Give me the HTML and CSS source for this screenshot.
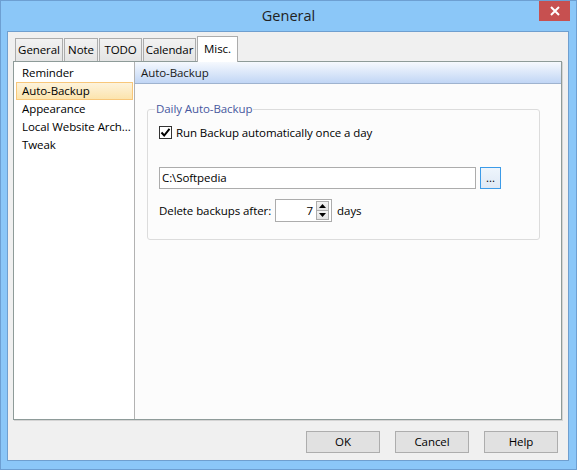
FILE: index.html
```html
<!DOCTYPE html>
<html>
<head>
<meta charset="utf-8">
<link rel="stylesheet" href="styles.css">
</head>
<body>
<div class="window">
  <div class="titlebar">
    <div></div>
    <div class="title">General</div>
    <div class="close"><svg width="10" height="10" viewBox="0 0 10 10"><path d="M1 1 L9 9 M9 1 L1 9" stroke="#fff" stroke-width="2"/></svg></div>
  </div>
  <div class="client">
    <div class="tabs">
      <div class="tab t-general">General</div>
      <div class="tab t-note">Note</div>
      <div class="tab t-todo">TODO</div>
      <div class="tab t-cal">Calendar</div>
      <div class="tab tab-sel t-misc">Misc.</div>
    </div>
    <div class="panel">
      <div class="list">
        <div class="item">Reminder</div>
        <div class="item item-sel">Auto-Backup</div>
        <div class="item">Appearance</div>
        <div class="item">Local Website Arch...</div>
        <div class="item">Tweak</div>
      </div>
      <div class="pane">
        <div class="pane-head">Auto-Backup</div>
        <fieldset class="group">
          <legend>Daily Auto-Backup</legend>
          <div class="check-row">
            <span class="checkbox"><svg width="11" height="11" viewBox="0 0 11 11"><path d="M1.5 5.5 L4.2 8.5 L9.5 1.8" fill="none" stroke="#000" stroke-width="2"/></svg></span>
            <span>Run Backup automatically once a day</span>
          </div>
          <div class="path-row">
            <div class="field">C:\Softpedia</div>
            <div class="browse">...</div>
          </div>
          <div class="spin-row">
            <span>Delete backups after:</span>
            <div class="spin">
              <div class="spin-val">7</div>
              <div class="spin-btns">
                <div class="spin-btn"><svg width="7" height="4" viewBox="0 0 7 4"><path d="M0 4 L3.5 0 L7 4 Z" fill="#000"/></svg></div>
                <div class="spin-btn"><svg width="7" height="4" viewBox="0 0 7 4"><path d="M0 0 L3.5 4 L7 0 Z" fill="#000"/></svg></div>
              </div>
            </div>
            <span class="days">days</span>
          </div>
        </fieldset>
      </div>
    </div>
    <div class="buttons">
      <div class="btn">OK</div>
      <div class="btn">Cancel</div>
      <div class="btn">Help</div>
    </div>
  </div>
</div>
</body>
</html>
```
FILE: styles.css
```css
html, body {
  margin: 0;
  padding: 0;
}
body {
  width: 577px;
  height: 470px;
  overflow: hidden;
  font-family: "Open Sans", "Noto Sans", sans-serif;
  font-size: 11.5px;
  letter-spacing: -0.08px;
  color: #000;
}
.window {
  box-sizing: border-box;
  width: 577px;
  height: 470px;
  background: #8bc7f8;
  border: 1px solid #6d9fd2;
  display: flex;
  flex-direction: column;
}
.titlebar {
  height: 30px;
  display: grid;
  grid-template-columns: 1fr auto 1fr;
  align-items: start;
}
.title {
  font-size: 14.5px;
  letter-spacing: 0;
  color: #222;
  line-height: 29px;
}
.close {
  justify-self: end;
  margin-right: 6px;
  width: 31px;
  height: 20px;
  background: #c75050;
  display: flex;
  align-items: center;
  justify-content: center;
}
.client {
  flex: 1;
  margin: 0 7px 8px 6px;
  border: 1px solid #6f9fcf;
  background: #f0f0f0;
  display: flex;
  flex-direction: column;
  padding-top: 4px;
}
.tabs {
  height: 25px;
  display: flex;
  align-items: flex-end;
  padding-left: 7px;
  position: relative;
  z-index: 2;
}
.tab {
  box-sizing: border-box;
  height: 23px;
  border: 1px solid #acacac;
  border-bottom: none;
  background: linear-gradient(#f2f2f2, #e4e4e4);
  text-align: center;
  line-height: 22px;
  margin-right: 1px;
}
.t-general { width: 48px; }
.t-note { width: 34px; }
.t-todo { width: 43px; }
.t-cal { width: 53px; }
.tab-sel {
  height: 26px;
  width: 41px;
  background: #fff;
  margin-bottom: -1px;
  line-height: 24px;
  margin-right: 0;
}
.panel {
  box-sizing: border-box;
  height: 359px;
  margin: 0 6px 0 5px;
  border: 1px solid #8e9b99;
  box-shadow: 1px 1px 0 #d4d4d4;
  background: #fff;
  display: flex;
}
.list {
  box-sizing: border-box;
  width: 121px;
  border-right: 1px solid #b2b2b2;
  background: #fff;
  padding: 2px 1px 0 2px;
}
.item {
  box-sizing: border-box;
  height: 18px;
  line-height: 18px;
  padding-left: 6px;
  white-space: nowrap;
  overflow: hidden;
}
.item-sel {
  border: 1px solid #f8c77a;
  background: linear-gradient(#fdf3dc, #fce4ad);
  padding-left: 5px;
  line-height: 16px;
}
.pane {
  flex: 1;
  background: #fcfcfc;
}
.pane-head {
  box-sizing: border-box;
  height: 22px;
  line-height: 21px;
  padding-left: 6px;
  border-bottom: 1px solid #9fb3cf;
  background: linear-gradient(#f6f9fe, #c1d6f5);
  color: #1a1a1a;
}
.group {
  margin: 17px 21px 0 12px;
  border: 1px solid #dcdcdc;
  border-radius: 3px;
  padding: 7px 11px 17px 11px;
  min-width: 0;
}
.group legend {
  color: #47589e;
  padding: 0 1px;
  margin-left: -4px;
  line-height: 16px;
}
.check-row {
  display: flex;
  align-items: center;
  height: 16px;
}
.checkbox {
  box-sizing: border-box;
  width: 13px;
  height: 13px;
  border: 1px solid #333;
  background: #fff;
  display: flex;
  align-items: center;
  justify-content: center;
  margin-right: 4px;
}
.path-row {
  display: flex;
  margin-top: 27px;
  gap: 4px;
}
.field {
  box-sizing: border-box;
  width: 317px;
  height: 22px;
  border: 1px solid #acacac;
  background: #fff;
  line-height: 20px;
  padding-left: 2px;
}
.browse {
  box-sizing: border-box;
  width: 21px;
  height: 22px;
  border: 1px solid #3c9be8;
  background: linear-gradient(#eef5fc, #dfe9f5);
  text-align: center;
  line-height: 20px;
}
.spin-row {
  display: flex;
  align-items: center;
  margin-top: 10px;
  gap: 4px;
}
.spin {
  box-sizing: border-box;
  width: 57px;
  height: 23px;
  border: 1px solid #acacac;
  background: #fff;
  display: flex;
  align-items: center;
  padding: 1px 2px 1px 0;
}
.spin-val {
  flex: 1;
  text-align: right;
  padding-right: 3px;
}
.spin-btns {
  display: flex;
  flex-direction: column;
  width: 13px;
  height: 19px;
}
.spin-btn {
  box-sizing: border-box;
  flex: 1;
  border: 1px solid #acacac;
  background: linear-gradient(#f3f3f3, #e3e3e3);
  display: flex;
  align-items: center;
  justify-content: center;
}
.spin-btn + .spin-btn {
  border-top: none;
}
.days {
  margin-left: 1px;
}
.buttons {
  display: flex;
  justify-content: flex-end;
  gap: 15px;
  margin-top: 11px;
  padding-right: 10px;
}
.btn {
  box-sizing: border-box;
  width: 74px;
  height: 22px;
  border: 1px solid #adadad;
  background: #e1e1e1;
  text-align: center;
  line-height: 20px;
}
```
